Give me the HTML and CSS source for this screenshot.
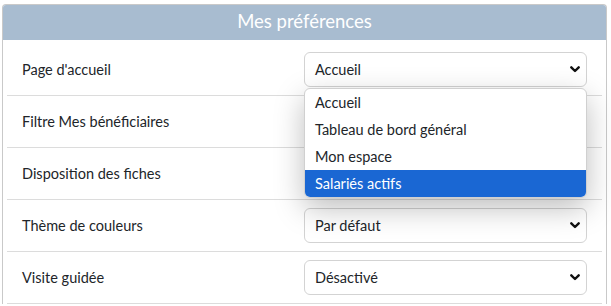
FILE: index.html
```html
<!DOCTYPE html>
<html lang="fr">
<head>
<meta charset="utf-8">
<title>Mes préférences</title>
<link rel="stylesheet" href="styles.css">
</head>
<body>
<div class="page">
  <section class="panel">
    <header class="panel-head">Mes préférences</header>
    <div class="panel-body">
      <div class="row">
        <span class="label">Page d'accueil</span>
        <div class="select-wrap">
          <div class="select"><span>Accueil</span><svg class="chev" width="10" height="7" viewBox="0 0 10 7"><polyline points="1.3,1.3 5,5 8.7,1.3" fill="none" stroke="#111" stroke-width="2.4" stroke-linecap="round" stroke-linejoin="round"/></svg></div>
          <ul class="popup">
            <li>Accueil</li>
            <li>Tableau de bord général</li>
            <li>Mon espace</li>
            <li class="active">Salariés actifs</li>
          </ul>
        </div>
      </div>
      <div class="row">
        <span class="label">Filtre Mes bénéficiaires</span>
        <div class="select-wrap">
          <div class="select"></div>
        </div>
      </div>
      <div class="row">
        <span class="label">Disposition des fiches</span>
        <div class="select-wrap">
          <div class="select"></div>
        </div>
      </div>
      <div class="row">
        <span class="label">Thème de couleurs</span>
        <div class="select-wrap">
          <div class="select"><span>Par défaut</span><svg class="chev" width="10" height="7" viewBox="0 0 10 7"><polyline points="1.3,1.3 5,5 8.7,1.3" fill="none" stroke="#111" stroke-width="2.4" stroke-linecap="round" stroke-linejoin="round"/></svg></div>
        </div>
      </div>
      <div class="row">
        <span class="label">Visite guidée</span>
        <div class="select-wrap">
          <div class="select"><span>Désactivé</span><svg class="chev" width="10" height="7" viewBox="0 0 10 7"><polyline points="1.3,1.3 5,5 8.7,1.3" fill="none" stroke="#111" stroke-width="2.4" stroke-linecap="round" stroke-linejoin="round"/></svg></div>
        </div>
      </div>
    </div>
  </section>
</div>
</body>
</html>
```
FILE: styles.css
```css
html, body {
  margin: 0;
  padding: 0;
  background: #fff;
}
body {
  font-family: "Lato", "Noto Sans", sans-serif;
  font-size: 14.5px;
  color: #212529;
  overflow: hidden;
}
.page {
  padding: 4px 4px 0 2px;
}
.panel {
  border: 1px solid #c9c9c9;
  border-bottom: none;
  border-radius: 4px 4px 0 0;
  background: #fff;
}
.panel-head {
  background: #a8bcd0;
  color: #fff;
  font-size: 18.5px;
  text-align: center;
  height: 35px;
  line-height: 33px;
  border-radius: 3px 3px 0 0;
}
.panel-body {
  padding: 4px 4px 0 4px;
}
.row {
  display: flex;
  align-items: center;
  padding: 8px 15px 8px 15px;
  border-bottom: 1px solid #dcdcdc;
}
.label {
  flex: 1;
}
.select-wrap {
  position: relative;
  width: 283px;
}
.select {
  display: flex;
  align-items: center;
  justify-content: space-between;
  height: 33px;
  border: 1px solid #d3d3d3;
  border-radius: 6px;
  padding: 0 6px 0 10px;
  background: #fff;
}
.chev {
  display: block;
}
.popup {
  position: absolute;
  top: 36px;
  left: 0;
  right: 0;
  margin: 0;
  padding: 0;
  list-style: none;
  background: #fff;
  border: 1px solid #d0d0d0;
  border-radius: 6px;
  overflow: hidden;
  box-shadow: 0 10px 30px rgba(0, 0, 0, 0.26);
  z-index: 5;
}
.popup li {
  height: 27px;
  line-height: 27px;
  padding: 0 10px;
}
.popup li.active {
  background: #1a67d3;
  color: #fff;
}
```
